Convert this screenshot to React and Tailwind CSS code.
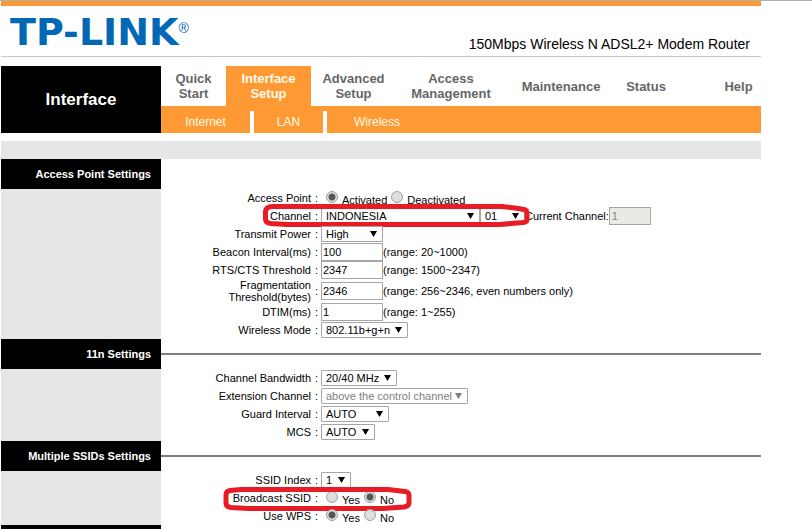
import React, { useState } from 'react'
import clsx from 'clsx'

const tabs = [
  { name: 'Quick Start', width: 'w-[65px]' },
  { name: 'Interface Setup', width: 'w-[85px]' },
  { name: 'Advanced Setup', width: 'w-[85px]' },
  { name: 'Access Management', width: 'w-[110px]' },
  { name: 'Maintenance', width: 'w-[110px]' },
  { name: 'Status', width: 'w-[60px]' },
  { name: 'Help', width: 'w-[45px] ml-auto' },
]

const Row = ({ label, htmlFor, tall, children }) => (
  <div className={clsx('relative flex items-center', tall ? 'h-6' : 'h-[18px]')}>
    {htmlFor ? (
      <label htmlFor={htmlFor} className="w-[150px] text-right leading-3">{label}</label>
    ) : (
      <span className="w-[150px] text-right leading-3">{label}</span>
    )}
    <span className="w-[10px] pl-1">:</span>
    {children}
  </div>
)

const Select = ({ id, label, options, width, disabled }) => (
  <span className={clsx('relative', width)}>
    <select
      id={id}
      aria-label={label}
      disabled={disabled}
      className="block h-4 w-full appearance-none rounded-[1px] border border-[#a6a6a6] bg-white pl-1 leading-3 text-black disabled:text-[#808080]"
    >
      {options.map((option) => (
        <option key={option}>{option}</option>
      ))}
    </select>
    <svg
      viewBox="0 0 7 6"
      className={clsx('pointer-events-none absolute right-[6px] top-[5px] h-[6px] w-[7px]', disabled ? 'fill-[#808080]' : 'fill-black')}
    >
      <path d="M0 0h7L3.500 6z" />
    </svg>
  </span>
)

const TextRow = ({ id, label, value, hint, tall }) => (
  <Row label={label} htmlFor={id} tall={tall}>
    <input
      id={id}
      defaultValue={value}
      className="h-[18px] w-[62px] border border-[#a6a6a6] bg-white px-px text-black"
    />
    <span>{hint}</span>
  </Row>
)

const RadioGroup = ({ name, options, initial }) => {
  const [selected, setSelected] = useState(initial)

  return (
    <div role="radiogroup" aria-label={name} className="flex gap-1 pt-px pl-[5px]">
      {options.map((option) => (
        <label key={option} className="flex items-start gap-1">
          <input
            type="radio"
            name={name}
            checked={selected === option}
            onChange={() => setSelected(option)}
            className="size-3 appearance-none rounded-full border border-[#a0a0a0] bg-[#dedede] checked:bg-[radial-gradient(circle,#555_0_3px,#dedede_4px)]"
          />
          <span className="pt-[3px] leading-3">{option}</span>
        </label>
      ))}
    </div>
  )
}

const Section = ({ title, line = true, children }) => (
  <section>
    <div className="flex items-center">
      <h2 className="h-[30px] w-40 bg-black pr-[10px] text-right text-[11px] leading-[30px] font-bold text-white">
        {title}
      </h2>
      {line && <div className="h-[2px] flex-1 bg-[#808080]" />}
    </div>
    <div className="flex">
      <div className="w-40 shrink-0 bg-[#e6e6e6]" />
      <div className="flex-1">{children}</div>
    </div>
  </section>
)

const App = () => {
  const [activeTab, setActiveTab] = useState('Interface Setup')

  return (
    <div className="h-screen overflow-hidden border-t border-[#b0b0b0] bg-white pl-px font-['Liberation_Sans',Arial,sans-serif] text-[11px] text-black">
      <div className="w-full max-w-[760px]">
        <header className="flex h-14 items-end justify-between border-t-5 border-b border-t-[#ff9933] border-b-[#c8c8c8] pr-[11px] pl-[9px]">
          <div className="flex items-start pb-1 text-[#0068b4]">
            <span className="font-['DejaVu_Sans',Verdana,sans-serif] text-[38px] leading-10 font-bold">TP-LINK</span>
            <span className="pt-2 text-[14px] leading-4">®</span>
          </div>
          <p className="pb-1 text-[14px] leading-4">150Mbps Wireless N ADSL2+ Modem Router</p>
        </header>

        <div className="mt-[9px] flex">
          <h1 className="flex w-40 shrink-0 items-center justify-center bg-black text-[17px] font-bold text-white">
            Interface
          </h1>
          <div className="flex-1">
            <nav className="flex h-10">
              {tabs.map((tab) => (
                <button
                  key={tab.name}
                  type="button"
                  onClick={() => setActiveTab(tab.name)}
                  className={clsx(
                    'text-center text-[13px] leading-[15px] font-bold',
                    tab.width,
                    tab.name === activeTab ? 'bg-[#ff9933] text-[#fffbe8]' : 'text-[#666]'
                  )}
                >
                  {tab.name}
                </button>
              ))}
            </nav>
            <nav className="flex h-[27px] items-end bg-[#ff9933] text-center text-[12px] leading-[22px] text-[#fffbe8]">
              <a href="#internet" className="w-[89px]">Internet</a>
              <a href="#lan" className="w-[77px] border-x-4 border-white">LAN</a>
              <a href="#wireless" className="w-[100px]">Wireless</a>
            </nav>
          </div>
        </div>

        <div className="mt-2 h-[18px] bg-[#e6e6e6]" />

        <form>
          <Section title="Access Point Settings" line={false}>
            <Row label="Access Point">
              <RadioGroup name="Access Point" options={['Activated', 'Deactivated']} initial="Activated" />
            </Row>
            <Row label="Channel" htmlFor="channel">
              <Select id="channel" options={['INDONESIA']} width="w-[159px]" />
              <Select label="Channel number" options={['01']} width="w-[45px]" />
              <label htmlFor="current">Current Channel:</label>
              <input
                id="current"
                disabled
                defaultValue="1"
                className="h-[18px] w-[42px] border border-[#a6a6a6] bg-[#ebe9e4] px-[2px] text-[#808080]"
              />
              <svg viewBox="0 0 268 24" className="pointer-events-none absolute top-[-3px] left-[101px] h-6 w-[268px]">
                <path
                  d="M10 2.500H240L253 4L262 5.500Q265 6 265 9V16Q265 18 261 18.500L238 20.500H25L9 19.500Q3.500 19 3.500 15V8Q3.500 3 10 2.500Z"
                  fill="none"
                  stroke="#e81c24"
                  strokeWidth="5"
                  strokeLinejoin="round"
                />
              </svg>
            </Row>
            <Row label="Transmit Power" htmlFor="power">
              <Select id="power" options={['High', 'Medium', 'Low']} width="w-[62px]" />
            </Row>
            <TextRow id="beacon" label="Beacon Interval(ms)" value="100" hint="(range: 20~1000)" />
            <TextRow id="rts" label="RTS/CTS Threshold" value="2347" hint="(range: 1500~2347)" />
            <TextRow
              id="fragmentation"
              label={<>Fragmentation<br />Threshold(bytes)</>}
              value="2346"
              hint="(range: 256~2346, even numbers only)"
              tall
            />
            <TextRow id="dtim" label="DTIM(ms)" value="1" hint="(range: 1~255)" />
            <Row label="Wireless Mode" htmlFor="mode">
              <Select id="mode" options={['802.11b+g+n']} width="w-[87px]" />
            </Row>
          </Section>

          <Section title="11n Settings">
            <Row label="Channel Bandwidth" htmlFor="bandwidth">
              <Select id="bandwidth" options={['20/40 MHz', '20 MHz']} width="w-[76px]" />
            </Row>
            <Row label="Extension Channel" htmlFor="extension">
              <Select id="extension" options={['above the control channel']} width="w-[147px]" disabled />
            </Row>
            <Row label="Guard Interval" htmlFor="guard">
              <Select id="guard" options={['AUTO']} width="w-[68px]" />
            </Row>
            <Row label="MCS" htmlFor="mcs">
              <Select id="mcs" options={['AUTO']} width="w-[54px]" />
            </Row>
          </Section>

          <Section title="Multiple SSIDs Settings">
            <Row label="SSID Index" htmlFor="ssid">
              <Select id="ssid" options={['1']} width="w-[30px]" />
            </Row>
            <Row label="Broadcast SSID">
              <RadioGroup name="Broadcast SSID" options={['Yes', 'No']} initial="No" />
              <svg viewBox="0 0 190 26" className="pointer-events-none absolute top-[-3px] left-[62px] h-[26px] w-[190px]">
                <path
                  d="M18 3.500H165L182 5.500Q186 6 186 9V17Q186 20 181 21L160 22.500H25L8 21.500Q3 21 3 17V9Q3 5 7 4.500Z"
                  fill="none"
                  stroke="#e81c24"
                  strokeWidth="5"
                  strokeLinejoin="round"
                />
              </svg>
            </Row>
            <Row label="Use WPS">
              <RadioGroup name="Use WPS" options={['Yes', 'No']} initial="Yes" />
            </Row>
          </Section>
          <div className="h-[30px] w-40 bg-black" />
        </form>
      </div>
    </div>
  )
}

export default App
